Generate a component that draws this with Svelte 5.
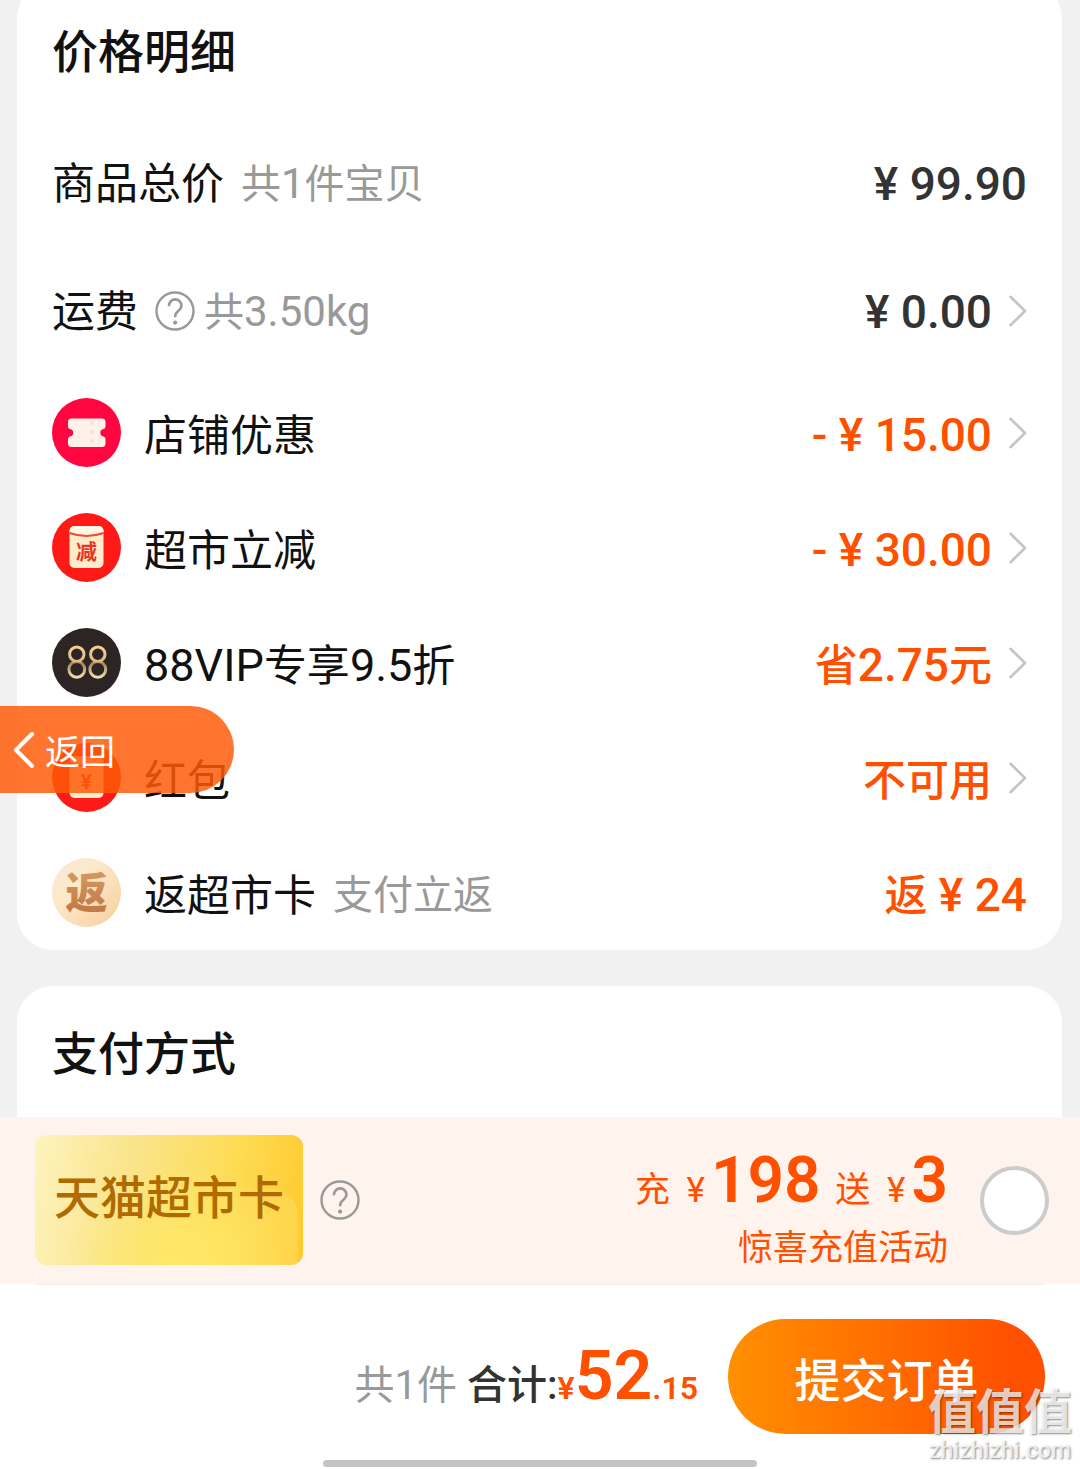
<script lang="ts">
  type Row = {
    label: string;
    value: string;
    icon?: 'coupon' | 'off' | 'vip' | 'packet' | 'cashback';
    note?: string;
    help?: boolean;
    dark?: boolean;
    arrow?: boolean;
  };

  const rows: Row[] = [
    { label: '商品总价', note: '共1件宝贝', value: '¥ 99.90', dark: true },
    { label: '运费', help: true, note: '共3.50kg', value: '¥ 0.00', dark: true, arrow: true },
    { icon: 'coupon', label: '店铺优惠', value: '- ¥ 15.00', arrow: true },
    { icon: 'off', label: '超市立减', value: '- ¥ 30.00', arrow: true },
    { icon: 'vip', label: '88VIP专享9.5折', value: '省2.75元', arrow: true },
    { icon: 'packet', label: '红包', value: '不可用', arrow: true },
    { icon: 'cashback', label: '返超市卡', note: '支付立返', value: '返 ¥ 24' },
  ];

  // Latin runs are set a little larger than the Chinese text around them
  function runs(text: string) {
    return text.match(/[\u4e00-\u9fff]+|[^\u4e00-\u9fff]+/g) ?? [];
  }

  let topUp = $state(false);
</script>

{#snippet mixed(text: string)}
  {#each runs(text) as run}<span class:latin={run.charCodeAt(0) < 256}>{run}</span>{/each}
{/snippet}

{#snippet helpIcon()}
  <svg class="help" viewBox="0 0 40 40" aria-hidden="true">
    <circle cx="20" cy="20" r="18.5" fill="none" stroke="currentColor" stroke-width="2.4" />
    <path d="M14 15.2V14.600a6.200 6.200 0 0 1 12.400 0c0 2.600-1.600 4-3.200 5.300-1.700 1.400-3 2.500-3 4.900v1.400" fill="none" stroke="currentColor" stroke-width="2.6" />
    <circle cx="20.1" cy="31.600" r="2.1" fill="currentColor" />
  </svg>
{/snippet}

{#snippet badge(kind: Row['icon'])}
  <svg class="badge" viewBox="0 0 69 69" aria-hidden="true">
    {#if kind === 'coupon'}
      <circle cx="34.5" cy="34.5" r="34.5" fill="#ff0640" />
      <path d="M19.500 20.500h30.500a3.500 3.500 0 0 1 3.500 3.500v4.500q0 2-2 2.500a3.800 3.800 0 0 0 0 7.500q2 .5 2 2.500v4.500a3.500 3.500 0 0 1-3.500 3.500h-30.500a3.500 3.500 0 0 1-3.500-3.500v-4.500q0-2 2-2.500a3.800 3.800 0 0 0 0-7.500q-2-.5-2-2.500v-4.500a3.500 3.500 0 0 1 3.500-3.500z" fill="#fff0ea" />
      <path d="M40 23v24" stroke="#ffdcd8" stroke-width="3" stroke-dasharray="4 5" />
    {:else if kind === 'off'}
      <circle cx="34.5" cy="34.5" r="34.5" fill="#ff1a17" />
      <rect x="17.500" y="13" width="34" height="42" rx="5" fill="#ffeccb" />
      <path d="M17.500 19v-1a5 5 0 0 1 5-5h24a5 5 0 0 1 5 5v1q-17 6-34 0z" fill="#fff6e6" />
      <path d="M17.500 20q17 6 34 0" fill="none" stroke="#ef4a35" stroke-width="2" />
      <text x="34.5" y="46" font-size="21" font-weight="700" fill="#ea3323" text-anchor="middle">减</text>
    {:else if kind === 'vip'}
      <defs>
        <linearGradient id="gold" gradientUnits="userSpaceOnUse" x1="0" y1="18" x2="0" y2="50">
          <stop offset="0" stop-color="#f6cf98" />
          <stop offset=".48" stop-color="#e0ba86" />
          <stop offset=".54" stop-color="#a1845f" />
          <stop offset="1" stop-color="#f8dfb4" />
        </linearGradient>
      </defs>
      <circle cx="34.5" cy="34.5" r="34.5" fill="#2c2523" />
      <g fill="none" stroke="url(#gold)" stroke-width="3">
        <ellipse cx="24.800" cy="26.200" rx="7.200" ry="7.200" />
        <ellipse cx="24.800" cy="41.300" rx="7.900" ry="7.900" />
        <ellipse cx="45.800" cy="26.200" rx="7.200" ry="7.200" />
        <ellipse cx="45.800" cy="41.300" rx="7.900" ry="7.900" />
      </g>
    {:else if kind === 'packet'}
      <circle cx="34.5" cy="34.5" r="34.5" fill="#ff1a17" />
      <rect x="17.500" y="13" width="34" height="42" rx="5" fill="#ffeccb" />
      <path d="M17.500 20q17 6 34 0" fill="none" stroke="#ef4a35" stroke-width="2" />
      <text x="34.5" y="46" font-size="21" font-weight="700" fill="#ea3323" text-anchor="middle">¥</text>
    {:else}
      <defs>
        <linearGradient id="cream" x1="0" y1="0" x2="1" y2="1">
          <stop offset="0" stop-color="#f6e9d8" />
          <stop offset=".35" stop-color="#fde9cb" />
          <stop offset="1" stop-color="#f6cf9c" />
        </linearGradient>
        <linearGradient id="bronze" x1="0" y1="0" x2="0" y2="1">
          <stop offset="0" stop-color="#d69a64" />
          <stop offset="1" stop-color="#bd7540" />
        </linearGradient>
      </defs>
      <circle cx="34.5" cy="34.5" r="34.5" fill="url(#cream)" />
      <text x="34.5" y="50" font-size="42" font-weight="900" fill="url(#bronze)" text-anchor="middle">返</text>
    {/if}
  </svg>
{/snippet}

<div class="page">
  <section class="card prices">
    <h2>价格明细</h2>
    <ul>
      {#each rows as row}
        <li class:tall={!row.icon}>
          {#if row.icon}{@render badge(row.icon)}{/if}
          <span class="label">{@render mixed(row.label)}</span>
          {#if row.help}
            <button class="help-btn" aria-label="运费说明">{@render helpIcon()}</button>
          {/if}
          {#if row.note}
            <span class="note" class:tight={row.help}>{@render mixed(row.note)}</span>
          {/if}
          <span class="value" class:dark={row.dark}>{@render mixed(row.value)}</span>
          {#if row.arrow}
            <svg class="arrow" viewBox="0 0 18 32" aria-hidden="true">
              <path d="M1.500 1.800 16 16 1.500 30.200" fill="none" stroke="#c4c4c4" stroke-width="2.600" stroke-linecap="round" stroke-linejoin="round" />
            </svg>
          {/if}
        </li>
      {/each}
    </ul>
  </section>

  <section class="card payment">
    <h2>支付方式</h2>
  </section>

  <div class="promo">
    <div class="gift-card">天猫超市卡</div>
    <button class="help-btn" aria-label="超市卡说明">{@render helpIcon()}</button>
    <label class="offer" for="top-up">
      <span class="offer-line">充 <i>¥</i><b>198</b> 送 <i>¥</i><b>3</b></span>
      <span>惊喜充值活动</span>
    </label>
    <input id="top-up" type="checkbox" bind:checked={topUp} />
  </div>

  <footer>
    <div class="checkout">
      <p>
        <span class="count">共1件</span>
        <span class="total">合计:</span><span class="sum">¥<b>52</b>.15</span>
      </p>
      <button class="submit">提交订单</button>
    </div>
    <div class="home-bar"></div>
  </footer>

  <button class="back">
    <svg viewBox="0 0 22 38" aria-hidden="true">
      <path d="M19 3 3 19 19 35" fill="none" stroke="#fff" stroke-width="4" stroke-linecap="round" stroke-linejoin="round" />
    </svg>
    返回
  </button>

  <div class="watermark">
    <span class="mark">值值值</span>
    <span class="site">zhizhizhi.com</span>
  </div>
</div>

<style>
  :global(body) {
    background: #f1f1f1;
  }
  .page {
    position: relative;
    display: flex;
    flex-direction: column;
    min-height: 100vh;
    overflow: hidden;
    font-family: Roboto, 'Noto Sans CJK SC', sans-serif;
    color: #111;
  }
  button {
    border: 0;
    padding: 0;
    background: none;
    color: inherit;
    font: inherit;
  }
  .card {
    margin: 0 18px 0 17px;
    padding: 0 35px;
    background: #fff;
    border-radius: 36px;
  }
  /* The list is scrolled, so the top of the first card is cut off */
  .prices {
    margin-top: -18px;
  }
  .payment {
    flex: 1;
    margin-top: 36px;
    border-radius: 36px 36px 0 0;
  }
  h2 {
    margin: 0;
    padding: 36px 0 33px;
    font-size: 46px;
    font-weight: 500;
    line-height: 68px;
  }
  .payment h2 {
    padding: 34px 0 29px;
  }
  ul {
    margin: 0;
    padding: 0;
    list-style: none;
  }
  li {
    display: flex;
    align-items: center;
    height: 115px;
    font-size: 43px;
    line-height: 64px;
  }
  .label,
  .note,
  .value {
    padding-top: 6px;
  }
  .tall {
    height: 128px;
  }
  .tall .label,
  .tall .note,
  .tall .value {
    padding-top: 2px;
  }
  .latin {
    font-size: 45px;
    white-space: pre;
  }
  .badge {
    flex: none;
    width: 69px;
    height: 69px;
    margin-right: 23px;
  }
  .note {
    margin-left: 17px;
    color: #999;
    font-size: 40px;
  }
  .note.tight {
    margin-left: 9px;
  }
  .note .latin {
    font-size: 42px;
  }
  .help-btn {
    width: 40px;
    height: 40px;
    margin-left: 17px;
    color: #999;
  }
  .help {
    display: block;
    width: 40px;
    height: 40px;
  }
  .value {
    margin-left: auto;
    color: #ff5000;
    font-weight: 500;
  }
  .value .latin {
    font-size: 46px;
  }
  .value.dark {
    color: #333;
  }
  .arrow {
    flex: none;
    width: 18px;
    height: 32px;
    margin-left: 17px;
  }
  .promo {
    display: flex;
    align-items: center;
    padding: 18px 31px 19px 35px;
    background: #fff3ee;
  }
  .gift-card {
    position: relative;
    isolation: isolate;
    width: 268px;
    height: 130px;
    overflow: hidden;
    border-radius: 12px;
    background:
      radial-gradient(ellipse at 55% 100%, #ffe866 0%, transparent 55%),
      linear-gradient(100deg, #fdf3bd 0%, #fae48a 35%, #fddc55 70%, #ffc92c 100%);
    color: #b06a00;
    font-size: 46px;
    font-weight: 500;
    line-height: 126px;
    text-align: center;
    white-space: nowrap;
  }
  /* Pale sheen in the lower right corner */
  .gift-card::after {
    content: '';
    position: absolute;
    z-index: -1;
    right: 5px;
    bottom: -20px;
    width: 150px;
    height: 96px;
    border-radius: 100px 28px 0 0;
    background: linear-gradient(to left, rgba(255, 240, 150, 0.25), transparent 60%);
  }
  .offer {
    display: flex;
    flex-direction: column;
    align-items: flex-end;
    padding-top: 4px;
    margin-left: auto;
    color: #ff5000;
    font-size: 35px;
    line-height: 32px;
  }
  .offer-line {
    line-height: 84px;
  }
  .offer-line i {
    margin-left: 8px;
    font-style: normal;
  }
  .offer-line b {
    margin: 0 6px;
    font-size: 64px;
    font-weight: 600;
  }
  .offer-line b:last-child {
    margin-right: 0;
  }
  .promo input {
    appearance: none;
    width: 69px;
    height: 69px;
    margin: 0 0 0 32px;
    border: 4px solid #ccc;
    border-radius: 50%;
    background: #fff;
  }
  .promo input:checked {
    border-color: #ff5000;
    background: #ff5000;
  }
  footer {
    padding: 0 35px 2px;
    background: #fff;
  }
  .checkout {
    display: flex;
    align-items: center;
    justify-content: flex-end;
    padding-top: 34px;
    border-top: 1px solid #f3eae8;
    font-size: 40px;
  }
  p {
    margin: 0;
    padding-top: 10px;
    line-height: 80px;
    white-space: nowrap;
  }
  .count {
    color: #999;
  }
  .total {
    color: #333;
    font-weight: 500;
  }
  .sum {
    color: #ff5000;
    font-size: 32px;
    font-weight: 600;
  }
  .sum b {
    font-size: 68px;
    font-weight: 600;
  }
  .submit {
    width: 317px;
    height: 115px;
    margin-left: 30px;
    border-radius: 58px;
    background: linear-gradient(90deg, #ff9000, #ff5000 90%);
    color: #fff;
    font-size: 46px;
    font-weight: 500;
  }
  .home-bar {
    width: 43%;
    height: 7px;
    margin: 26px auto 0;
    border-radius: 4px;
    background: #c3c3c3;
  }
  .back {
    position: absolute;
    top: 706px;
    left: 0;
    display: flex;
    align-items: center;
    gap: 10px;
    width: 234px;
    height: 87px;
    padding-left: 13px;
    border-radius: 0 44px 44px 0;
    background: rgba(255, 91, 8, 0.84);
    color: #fff;
    font-size: 35px;
  }
  .back svg {
    width: 22px;
    height: 38px;
  }
  .watermark {
    position: absolute;
    right: 8px;
    bottom: 5px;
    display: flex;
    flex-direction: column;
    align-items: center;
    color: rgba(255, 255, 255, 0.75);
    text-shadow: 1px 1px 2px rgba(0, 0, 0, 0.45);
    pointer-events: none;
  }
  .mark {
    font-size: 48px;
    font-weight: 700;
    line-height: 50px;
  }
  .site {
    font-size: 23px;
    font-weight: 500;
    line-height: 26px;
  }
</style>
